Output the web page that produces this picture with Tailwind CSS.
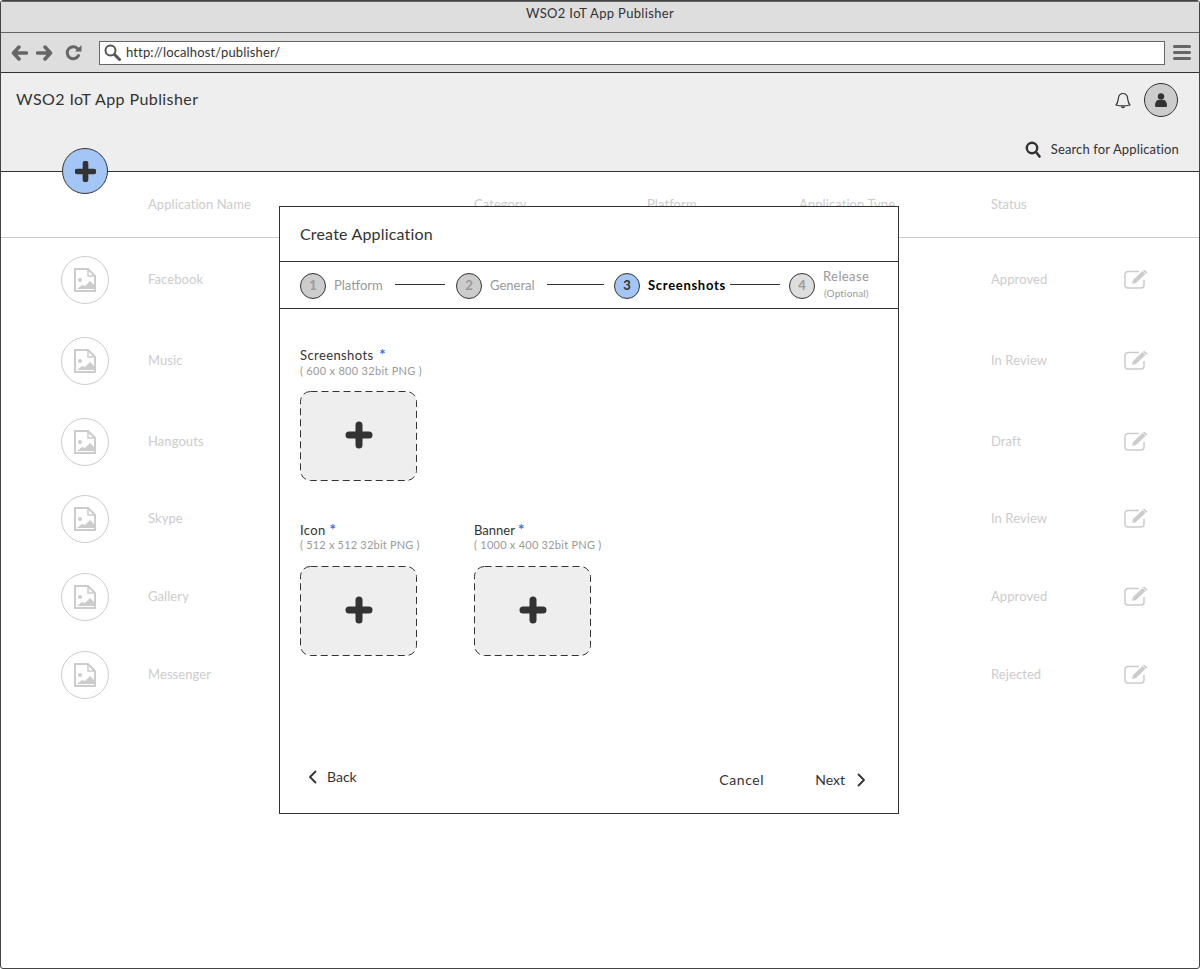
<!DOCTYPE html>
<html lang="en">

<head>
    <meta charset="UTF-8">
    <meta name="viewport" content="width=device-width, initial-scale=1.0">
    <title>WSO2 IoT App Publisher</title>
    <script src="https://cdn.jsdelivr.net/npm/@tailwindcss/browser@4"></script>
</head>

<body class="bg-white font-['Lato',sans-serif] text-[#333]">
    <svg class="hidden">
        <symbol id="file-image" viewBox="0 0 22 24">
            <path d="M1 1h13l7 7v15H1z" fill="none" stroke="currentColor" stroke-width="2" />
            <path d="M14 1v7h7" fill="none" stroke="currentColor" stroke-width="1.5" />
            <circle cx="6" cy="12" r="2" fill="currentColor" />
            <path d="M3 21l5-4 3 1 5-5 4 4v4z" fill="currentColor" />
        </symbol>
        <symbol id="edit" viewBox="0 0 24 20">
            <path d="M15 2.500H4a3 3 0 0 0-3 3V16a3 3 0 0 0 3 3h13a3 3 0 0 0 3-3v-5" fill="none" stroke="currentColor" stroke-width="1.500" />
            <path d="M8 15l1-4L18.500 2l3 3L12 14z" fill="currentColor" />
            <path d="M20 .5l3.500 3-1.200 1.200-3.300-3z" fill="currentColor" />
        </symbol>
        <symbol id="plus" viewBox="0 0 26 26">
            <path d="M13 3v20M3 13h20" fill="none" stroke="currentColor" stroke-width="7" stroke-linecap="round" />
        </symbol>
    </svg>

    <div class="relative h-[969px] w-[1200px] overflow-hidden rounded-[3px] border border-[#444]">
        <!-- Browser chrome -->
        <div class="flex h-[32px] items-center justify-center border-t border-[#666] border-b border-b-[#666] bg-[#dedede] pb-[6px] text-[13px] tracking-[0.33px]">WSO2 IoT App Publisher</div>
        <div class="flex h-[40px] items-center border-b border-[#333] bg-[#dedede] pl-[10px] pr-[8px] text-[#666]">
            <svg class="h-[18px] w-[17px]" viewBox="0 0 17 18">
                <path d="M8 3 2.500 9 8 15M3 9h12.500" fill="none" stroke="currentColor" stroke-width="3.500" stroke-linecap="round" stroke-linejoin="round" />
            </svg>
            <svg class="ml-[8px] h-[18px] w-[17px]" viewBox="0 0 17 18">
                <path d="M9 3l5.500 6L9 15M14 9H1.500" fill="none" stroke="currentColor" stroke-width="3.500" stroke-linecap="round" stroke-linejoin="round" />
            </svg>
            <svg class="ml-[12px] h-[18px] w-[17px]" viewBox="0 0 17 18">
                <path d="M13.500 11.500A6 6 0 1 1 12.500 4.500" fill="none" stroke="currentColor" stroke-width="3" stroke-linecap="round" />
                <path d="M10 7.500h6.500V1z" fill="currentColor" />
            </svg>
            <div class="ml-[17px] flex h-[24px] w-[1066px] items-center border border-[#666] bg-white pl-[4px]">
                <svg class="h-[17px] w-[17px] text-[#555]" viewBox="0 0 17 17">
                    <circle cx="6.500" cy="6.500" r="5" fill="none" stroke="currentColor" stroke-width="2" />
                    <path d="M10.500 10.500l5 5" stroke="currentColor" stroke-width="3" stroke-linecap="round" />
                </svg>
                <span class="ml-[5px] text-[13px] tracking-[0.15px] text-[#333]">http://localhost/publisher/</span>
            </div>
            <div class="ml-[8px] flex w-[18px] flex-col gap-[2.500px]">
                <div class="h-[3.500px] rounded-full bg-[#666]"></div>
                <div class="h-[3.500px] rounded-full bg-[#666]"></div>
                <div class="h-[3.500px] rounded-full bg-[#666]"></div>
            </div>
        </div>

        <!-- App header -->
        <div class="relative h-[99px] border-b border-[#333] bg-[#eeeeee]">
            <div class="flex items-start justify-between pl-[15px] pr-[21px] pt-[10px]">
                <h1 class="pt-[4px] text-[16px] tracking-[0.42px]">WSO2 IoT App Publisher</h1>
                <div class="flex items-center gap-[13px]">
                    <svg class="h-[18px] w-[16px]" viewBox="0 0 16 18">
                        <path d="M1 14c2-2 2-4 2.500-7.500C4 3.500 6 2.500 8 2.500s4 1 4.500 4C13 10 13 12 15 14c-4 1-10 1-14 0z" fill="none" stroke="currentColor" stroke-width="1.200" stroke-linejoin="round" />
                        <path d="M6.500 15.500c.5 1.500 2.500 1.500 3 0" fill="none" stroke="currentColor" stroke-width="1.200" />
                    </svg>
                    <div class="flex h-[34px] w-[34px] items-center justify-center rounded-full border border-[#333] bg-[#cccccc]">
                        <svg class="h-[14px] w-[12px]" viewBox="0 0 12 14">
                            <circle cx="6" cy="3.500" r="3.200" fill="currentColor" />
                            <path d="M1 14c-1 0-1-1-1-2 0-3 2-5 3-5h6c1 0 3 2 3 5 0 1 0 2-1 2z" fill="currentColor" />
                        </svg>
                    </div>
                </div>
            </div>
            <div class="mt-[23px] flex items-center justify-end gap-[10px] pr-[20px] text-[13px] tracking-[0.14px]">
                <svg class="h-[17px] w-[16px]" viewBox="0 0 16 17">
                    <circle cx="7" cy="7" r="5.200" fill="none" stroke="currentColor" stroke-width="2.400" />
                    <path d="M11 11l3.500 4.500" stroke="currentColor" stroke-width="2.600" stroke-linecap="round" />
                </svg>
                <span>Search for Application</span>
            </div>
            <button class="absolute left-[61px] top-[75px] flex h-[46px] w-[46px] items-center justify-center rounded-full border border-[#333] bg-[#a3c6f7]">
                <svg class="h-[21px] w-[21px]"><use href="#plus" /></svg>
            </button>
        </div>

        <!-- Application table, greyed out behind the dialog -->
        <div class="text-[13px] tracking-[0.08px] text-[#cccccc]">
            <div class="grid h-[66px] grid-cols-[147px_326px_173px_152px_192px_1fr] items-center border-b border-[#cccccc]">
                <div></div>
                <div>Application Name</div>
                <div>Category</div>
                <div>Platform</div>
                <div>Application Type</div>
                <div>Status</div>
            </div>
            <div class="mt-[18px] grid h-[48px] grid-cols-[60px_87px_843px_133px_1fr] items-center">
                <div></div>
                <div class="flex h-[48px] w-[48px] items-center justify-center rounded-full border border-[#cccccc]"><svg class="h-[24px] w-[22px]"><use href="#file-image" /></svg></div>
                <div>Facebook</div>
                <div>Approved</div>
                <svg class="-mt-[2px] h-[20px] w-[24px]"><use href="#edit" /></svg>
            </div>
            <div class="mt-[33px] grid h-[48px] grid-cols-[60px_87px_843px_133px_1fr] items-center">
                <div></div>
                <div class="flex h-[48px] w-[48px] items-center justify-center rounded-full border border-[#cccccc]"><svg class="h-[24px] w-[22px]"><use href="#file-image" /></svg></div>
                <div>Music</div>
                <div>In Review</div>
                <svg class="-mt-[2px] h-[20px] w-[24px]"><use href="#edit" /></svg>
            </div>
            <div class="mt-[33px] grid h-[48px] grid-cols-[60px_87px_843px_133px_1fr] items-center">
                <div></div>
                <div class="flex h-[48px] w-[48px] items-center justify-center rounded-full border border-[#cccccc]"><svg class="h-[24px] w-[22px]"><use href="#file-image" /></svg></div>
                <div>Hangouts</div>
                <div>Draft</div>
                <svg class="-mt-[2px] h-[20px] w-[24px]"><use href="#edit" /></svg>
            </div>
            <div class="mt-[29px] grid h-[48px] grid-cols-[60px_87px_843px_133px_1fr] items-center">
                <div></div>
                <div class="flex h-[48px] w-[48px] items-center justify-center rounded-full border border-[#cccccc]"><svg class="h-[24px] w-[22px]"><use href="#file-image" /></svg></div>
                <div>Skype</div>
                <div>In Review</div>
                <svg class="-mt-[2px] h-[20px] w-[24px]"><use href="#edit" /></svg>
            </div>
            <div class="mt-[30px] grid h-[48px] grid-cols-[60px_87px_843px_133px_1fr] items-center">
                <div></div>
                <div class="flex h-[48px] w-[48px] items-center justify-center rounded-full border border-[#cccccc]"><svg class="h-[24px] w-[22px]"><use href="#file-image" /></svg></div>
                <div>Gallery</div>
                <div>Approved</div>
                <svg class="-mt-[2px] h-[20px] w-[24px]"><use href="#edit" /></svg>
            </div>
            <div class="mt-[30px] grid h-[48px] grid-cols-[60px_87px_843px_133px_1fr] items-center">
                <div></div>
                <div class="flex h-[48px] w-[48px] items-center justify-center rounded-full border border-[#cccccc]"><svg class="h-[24px] w-[22px]"><use href="#file-image" /></svg></div>
                <div>Messenger</div>
                <div>Rejected</div>
                <svg class="-mt-[2px] h-[20px] w-[24px]"><use href="#edit" /></svg>
            </div>
        </div>

        <!-- Create Application dialog -->
        <div class="absolute left-[278px] top-[205px] h-[608px] w-[620px] border border-[#333] bg-white">
            <div class="flex h-[55px] items-center border-b border-[#333] pl-[20px] text-[16px] tracking-[0.18px]">Create Application</div>

            <div class="flex h-[47px] items-center border-b border-[#333] pl-[20px] pt-[1px] text-[13px]">
                <div class="flex h-[26px] w-[26px] items-center justify-center rounded-full border border-[#333] bg-[#cccccc] font-bold text-[#999]">1</div>
                <span class="ml-[8px] w-[61px] text-[#999]">Platform</span>
                <div class="-mt-[2px] h-px w-[50px] bg-[#333]"></div>
                <div class="ml-[11px] flex h-[26px] w-[26px] items-center justify-center rounded-full border border-[#333] bg-[#cccccc] font-bold text-[#999]">2</div>
                <span class="ml-[8px] w-[57px] text-[#999]">General</span>
                <div class="-mt-[2px] h-px w-[57px] bg-[#333]"></div>
                <div class="ml-[10px] flex h-[26px] w-[26px] items-center justify-center rounded-full border border-[#333] bg-[#a3c6f7] font-bold">3</div>
                <span class="ml-[8px] w-[82px] font-bold tracking-[0.7px] text-black">Screenshots</span>
                <div class="-mt-[2px] h-px w-[50px] bg-[#333]"></div>
                <div class="ml-[9px] flex h-[26px] w-[26px] items-center justify-center rounded-full border border-[#333] bg-[#dedede] font-bold text-[#999]">4</div>
                <div class="-mt-[3px] ml-[8px] flex flex-col text-[#999]">
                    <span class="leading-[18px] tracking-[0.4px]">Release</span>
                    <span class="pl-[1px] text-[10px] leading-[16px] tracking-[0.15px]">(Optional)</span>
                </div>
            </div>

            <div class="pl-[20px] pt-[38px]">
                <div class="text-[13px] leading-[14px] tracking-[0.4px]">Screenshots <span class="ml-[2px] text-[15px] font-bold leading-[14px] text-[#2a74e0]">*</span></div>
                <div class="mt-[2px] text-[11px] leading-[14px] tracking-[0.3px] text-[#999]">( 600 x 800 32bit PNG )</div>
                <svg class="mt-[12px] block h-[92px] w-[118px]" viewBox="0 0 118 92">
                    <rect x=".5" y="1.500" width="116" height="89" rx="10" fill="#eeeeee" stroke="#333" stroke-dasharray="7 4" />
                    <path d="M59 35v20M49 45h20" fill="none" stroke="#333" stroke-width="7" stroke-linecap="round" />
                </svg>

                <div class="mt-[40px] flex">
                    <div class="w-[174px]">
                        <div class="text-[13px] leading-[14px] tracking-[0.4px]">Icon <span class="text-[15px] font-bold leading-[14px] text-[#2a74e0]">*</span></div>
                        <div class="mt-[1px] text-[11px] leading-[14px] tracking-[0.2px] text-[#999]">( 512 x 512 32bit PNG )</div>
                        <svg class="mt-[13px] block h-[92px] w-[118px]" viewBox="0 0 118 92">
                            <rect x=".5" y="1.500" width="116" height="89" rx="10" fill="#eeeeee" stroke="#333" stroke-dasharray="7 4" />
                            <path d="M59 35v20M49 45h20" fill="none" stroke="#333" stroke-width="7" stroke-linecap="round" />
                        </svg>
                    </div>
                    <div>
                        <div class="text-[13px] leading-[14px]">Banner <span class="text-[15px] font-bold leading-[14px] text-[#2a74e0]">*</span></div>
                        <div class="mt-[1px] text-[11px] leading-[14px] tracking-[0.25px] text-[#999]">( 1000 x 400 32bit PNG )</div>
                        <svg class="mt-[13px] block h-[92px] w-[118px]" viewBox="0 0 118 92">
                            <rect x=".5" y="1.500" width="116" height="89" rx="10" fill="#eeeeee" stroke="#333" stroke-dasharray="7 4" />
                            <path d="M59 35v20M49 45h20" fill="none" stroke="#333" stroke-width="7" stroke-linecap="round" />
                        </svg>
                    </div>
                </div>
            </div>

            <div class="absolute bottom-[23px] left-[28px] right-[32px] flex items-start justify-between text-[14px]">
                <div class="-mt-[3px] flex items-center gap-[10px]">
                    <svg class="h-[14px] w-[9px]" viewBox="0 0 9 14"><path d="M7.500 1.500 2 7l5.500 5.500" fill="none" stroke="currentColor" stroke-width="1.800" stroke-linecap="round" stroke-linejoin="round" /></svg>
                    <span>Back</span>
                </div>
                <div class="flex items-center">
                    <span class="tracking-[0.6px]">Cancel</span>
                    <span class="ml-[51px]">Next</span>
                    <svg class="ml-[12px] h-[14px] w-[9px]" viewBox="0 0 9 14"><path d="M1.500 1.500 7 7l-5.500 5.500" fill="none" stroke="currentColor" stroke-width="1.800" stroke-linecap="round" stroke-linejoin="round" /></svg>
                </div>
            </div>
        </div>
    </div>
</body>

</html>
